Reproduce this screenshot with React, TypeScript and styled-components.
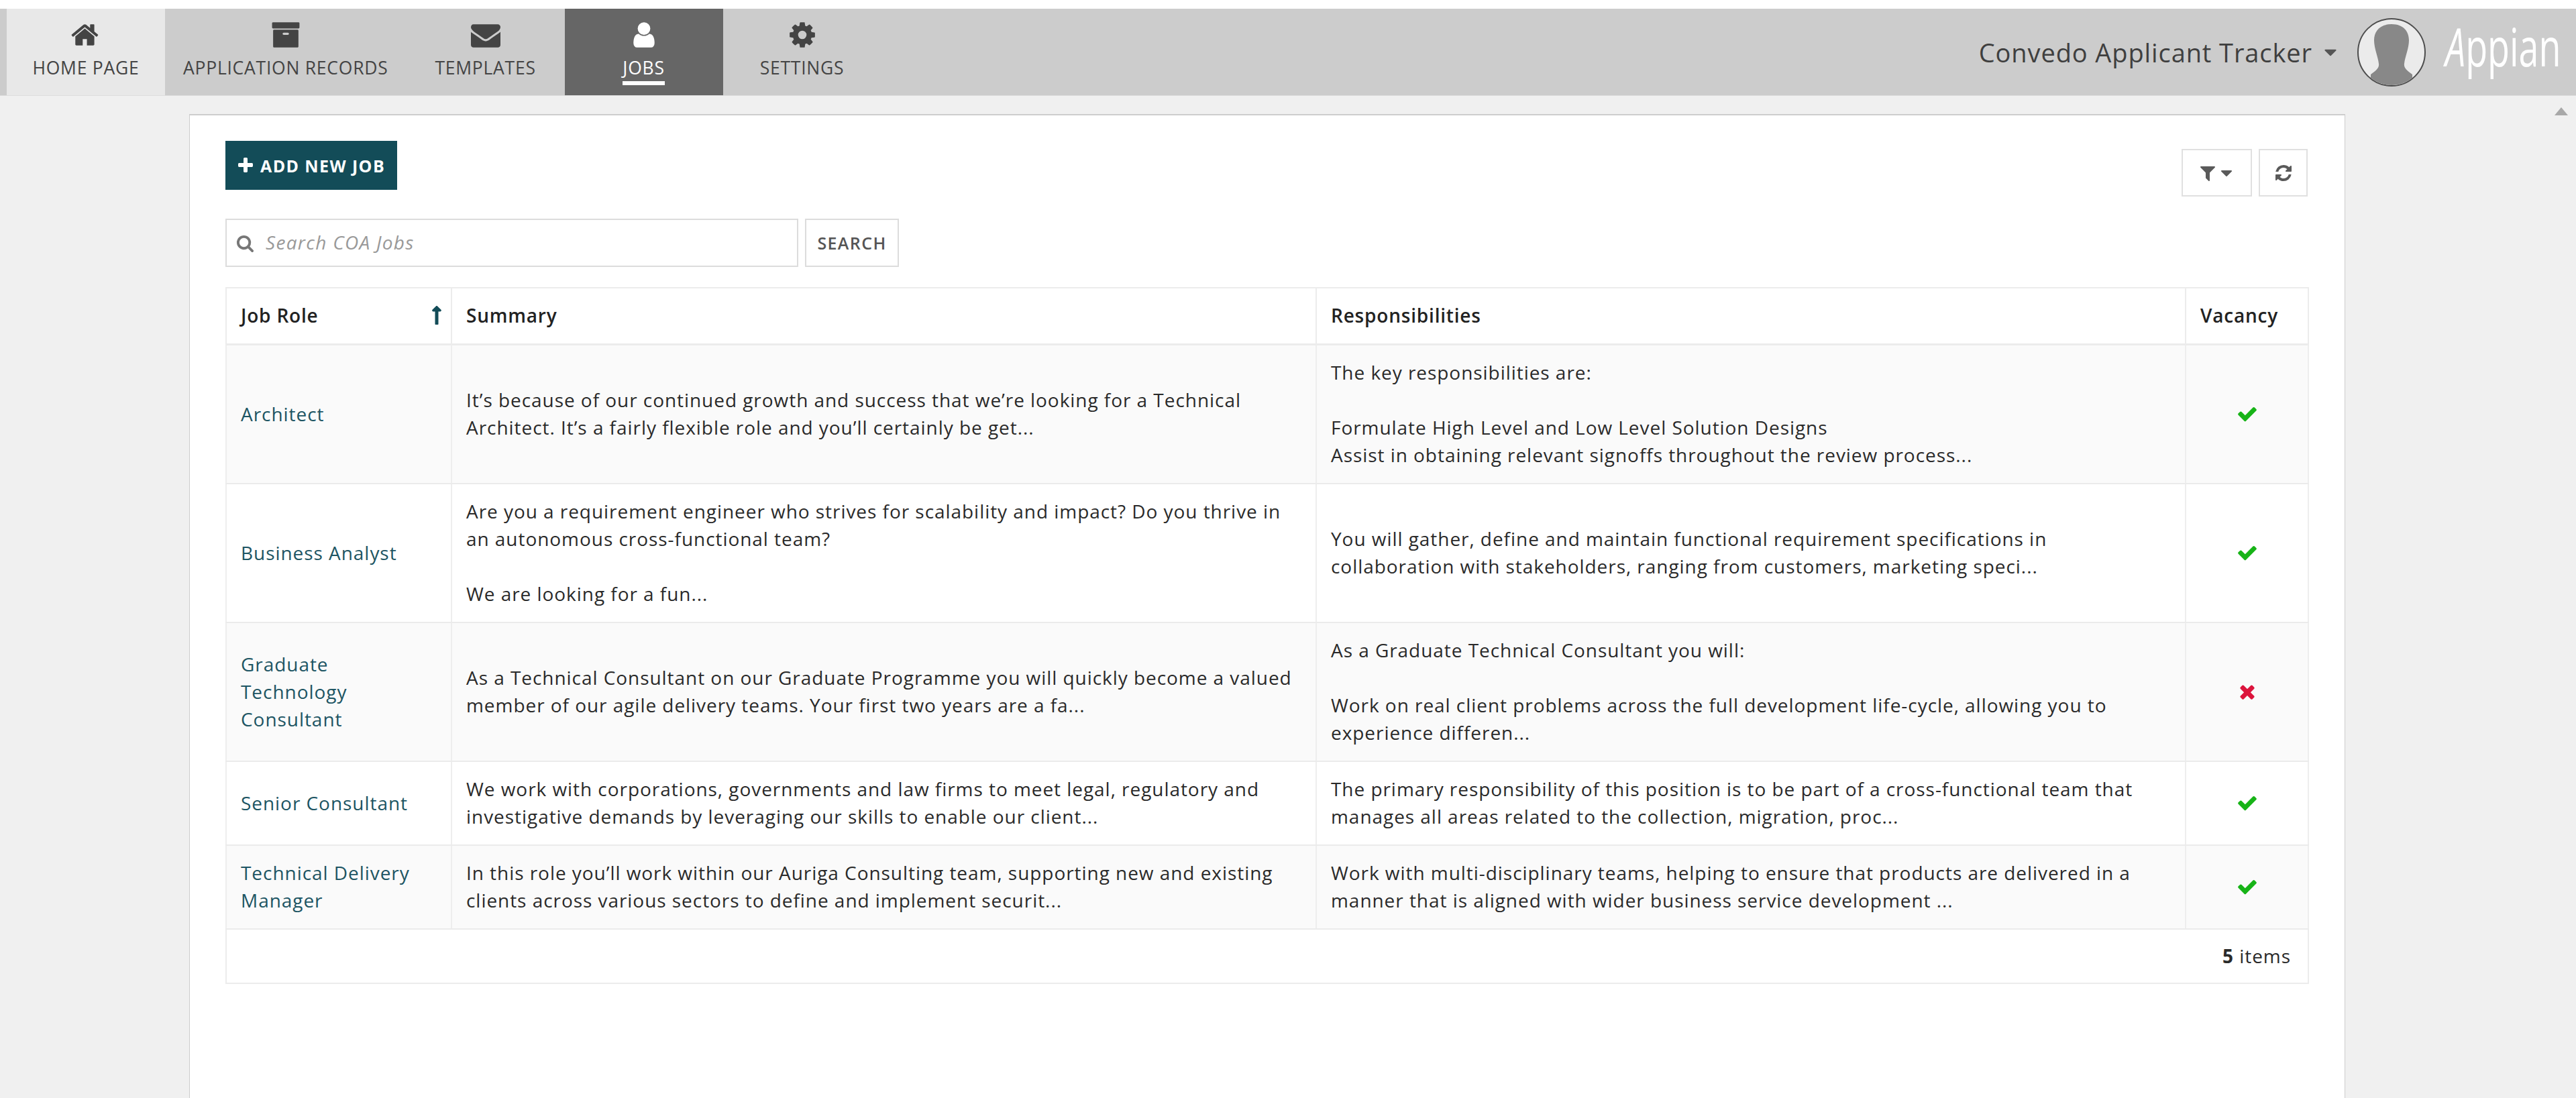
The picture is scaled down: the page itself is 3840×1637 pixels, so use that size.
import React from "react";
import styled, { createGlobalStyle } from "styled-components";
import { FaLongArrowAltUp } from "react-icons/fa";

const GlobalStyle = createGlobalStyle`
  html, body {
    margin: 0;
    padding: 0;
    height: 100%;
    background: #fff;
    overflow: hidden;
  }
  body {
    font-family: "Open Sans", "Liberation Sans", sans-serif;
    color: #222;
  }
  * { box-sizing: border-box; }
`;

// icons of the old icon font the page uses, all on a 1792 grid
const glyphs = {
  home: "M1408 992v480q0 26-19 45t-45 19h-384v-384h-256v384h-384q-26 0-45-19t-19-45v-480q0-1 .5-3t.5-3l575-474 575 474q1 2 1 6zm223-69l-62 74q-8 9-21 11h-3q-13 0-21-7l-692-577-692 577q-12 8-24 7-13-2-21-11l-62-74q-8-10-7-23.500t11-21.500l719-599q32-26 76-26t76 26l244 204v-195q0-14 9-23t23-9h192q14 0 23 9t9 23v408l219 182q10 8 11 21.500t-7 23.500z",
  archive: "M1088 832q0-26-19-45t-45-19h-256q-26 0-45 19t-19 45 19 45 45 19h256q26 0 45-19t19-45zm576-192v960q0 26-19 45t-45 19h-1408q-26 0-45-19t-19-45v-960q0-26 19-45t45-19h1408q26 0 45 19t19 45zm64-448v256q0 26-19 45t-45 19h-1536q-26 0-45-19t-19-45v-256q0-26 19-45t45-19h1536q26 0 45 19t19 45z",
  envelope: "M1792 710v794q0 66-47 113t-113 47h-1472q-66 0-113-47t-47-113v-794q44 49 101 87 362 246 497 345 57 42 92.500 65.500t94.500 48 110 24.500h2q51 0 110-24.500t94.500-48 92.500-65.500q170-123 498-345 57-39 100-87zm0-294q0 79-49 151t-122 123q-376 261-468 325-10 7-42.500 30.500t-54 38-52 32.500-57.500 27-50 9h-2q-23 0-50-9t-57.500-27-52-32.500-54-38-42.500-30.500q-91-64-262-182.500t-205-142.500q-62-42-117-115.500t-55-136.500q0-78 41.500-130t118.500-52h1472q65 0 112.500 47t47.500 113z",
  user: "M1536 1399q0 109-62.500 187t-150.500 78h-854q-88 0-150.500-78t-62.500-187q0-85 8.500-160.500t31.500-152 58.500-131 94-89 134.500-34.500q131 128 313 128t313-128q76 0 134.500 34.500t94 89 58.500 131 31.500 152 8.500 160.500zm-256-887q0 159-112.500 271.500t-271.500 112.500-271.500-112.500-112.500-271.500 112.500-271.500 271.500-112.500 271.500 112.500 112.500 271.500z",
  cog: "M1152 896q0-106-75-181t-181-75-181 75-75 181 75 181 181 75 181-75 75-181zm512-109v222q0 12-8 23t-20 13l-185 28q-19 54-39 91 35 50 107 138 10 12 10 25t-9 23q-27 37-99 108t-94 71q-12 0-26-9l-138-108q-44 23-91 38-16 136-29 186-7 28-36 28h-222q-14 0-24.500-8.500t-11.500-21.500l-28-184q-49-16-90-37l-141 107q-10 9-25 9-14 0-25-11-126-114-165-168-7-10-7-23 0-12 8-23 15-21 51-66.500t54-70.500q-27-50-41-99l-183-27q-13-2-21-12.500t-8-23.500v-222q0-12 8-23t19-13l186-28q14-46 39-92-40-57-107-138-10-12-10-24 0-10 9-23 26-36 98.500-107.500t94.500-71.500q13 0 26 10l138 107q44-23 91-38 16-136 29-186 7-28 36-28h222q14 0 24.500 8.500t11.500 21.500l28 184q49 16 90 37l142-107q9-9 24-9 13 0 25 10 129 119 165 170 7 8 7 22 0 12-8 23-15 21-51 66.500t-54 70.500q26 50 41 98l183 28q13 2 21 12.500t8 23.500z",
  filter: "M1595 295q17 41-14 70l-493 493v742q0 42-39 59-13 5-25 5-27 0-45-19l-256-256q-19-19-19-45v-486l-493-493q-31-29-14-70 17-39 59-39h1280q42 0 59 39z",
  refresh: "M1639 1056q0 5-1 7-64 268-268 434.500t-478 166.500q-146 0-282.500-55t-243.500-157l-129 129q-19 19-45 19t-45-19-19-45v-448q0-26 19-45t45-19h448q26 0 45 19t19 45-19 45l-137 137q71 66 161 102t187 36q134 0 250-65t186-179q11-17 53-117 8-23 30-23h192q13 0 22.500 9.500t9.500 22.500zm25-800v448q0 26-19 45t-45 19h-448q-26 0-45-19t-19-45 19-45l138-138q-148-137-349-137-134 0-250 65t-186 179q-11 17-53 117-8 23-30 23h-199q-13 0-22.500-9.500t-9.500-22.500v-7q65-268 270-434.500t480-166.500q146 0 284 55.500t245 156.500l130-129q19-19 45-19t45 19 19 45z",
  check: "M1671 566q0 40-28 68l-724 724-136 136q-28 28-68 28t-68-28l-136-136-362-362q-28-28-28-68t28-68l136-136q28-28 68-28t68 28l294 295 656-657q28-28 68-28t68 28l136 136q28 28 28 68z",
  times: "M1490 1322q0 40-28 68l-136 136q-28 28-68 28t-68-28l-294-294-294 294q-28 28-68 28t-68-28l-136-136q-28-28-28-68t28-68l294-294-294-294q-28-28-28-68t28-68l136-136q28-28 68-28t68 28l294 294 294-294q28-28 68-28t68 28l136 136q28 28 28 68t-28 68l-294 294 294 294q28 28 28 68z",
  search: "M1216 832q0-185-131.500-316.500t-316.500-131.500-316.500 131.500-131.500 316.500 131.500 316.500 316.500 131.500 316.500-131.500 131.500-316.500zm512 832q0 52-38 90t-90 38q-54 0-90-38l-343-342q-179 124-399 124-143 0-273.500-55.500t-225-150-150-225-55.500-273.500 55.500-273.500 150-225 225-150 273.500-55.500 273.500 55.500 225 150 150 225 55.500 273.500q0 220-124 399l343 343q37 37 37 90z",
  plus: "M1600 736v192q0 40-28 68t-68 28h-416v416q0 40-28 68t-68 28h-192q-40 0-68-28t-28-68v-416h-416q-40 0-68-28t-28-68v-192q0-40 28-68t68-28h416v-416q0-40 28-68t68-28h192q40 0 68 28t28 68v416h416q40 0 68 28t28 68z",
  caret: "M1408 704q0 26-19 45l-448 448q-19 19-45 19t-45-19l-448-448q-19-19-19-45t19-45 45-19h896q26 0 45 19t19 45z",
};

function Glyph({ name, className }: { name: keyof typeof glyphs; className?: string }) {
  return (
    <GlyphSvg className={className} viewBox="0 0 1792 1792">
      <path d={glyphs[name]} />
    </GlyphSvg>
  );
}

const tabs: { label: string; icon: keyof typeof glyphs; variant: string }[] = [
  { label: "HOME PAGE", icon: "home", variant: "home" },
  { label: "APPLICATION RECORDS", icon: "archive", variant: "plain" },
  { label: "TEMPLATES", icon: "envelope", variant: "plain" },
  { label: "JOBS", icon: "user", variant: "active" },
  { label: "SETTINGS", icon: "cog", variant: "plain" },
];

const jobs = [
  {
    role: ["Architect"],
    summary: [
      "It’s because of our continued growth and success that we’re looking for a Technical",
      "Architect. It’s a fairly flexible role and you’ll certainly be get...",
    ],
    duties: [
      "The key responsibilities are:",
      "",
      "Formulate High Level and Low Level Solution Designs",
      "Assist in obtaining relevant signoffs throughout the review process...",
    ],
    open: true,
  },
  {
    role: ["Business Analyst"],
    summary: [
      "Are you a requirement engineer who strives for scalability and impact? Do you thrive in",
      "an autonomous cross-functional team?",
      "",
      "We are looking for a fun...",
    ],
    duties: [
      "You will gather, define and maintain functional requirement specifications in",
      "collaboration with stakeholders, ranging from customers, marketing speci...",
    ],
    open: true,
  },
  {
    role: ["Graduate", "Technology", "Consultant"],
    summary: [
      "As a Technical Consultant on our Graduate Programme you will quickly become a valued",
      "member of our agile delivery teams. Your first two years are a fa...",
    ],
    duties: [
      "As a Graduate Technical Consultant you will:",
      "",
      "Work on real client problems across the full development life-cycle, allowing you to",
      "experience differen...",
    ],
    open: false,
  },
  {
    role: ["Senior Consultant"],
    summary: [
      "We work with corporations, governments and law firms to meet legal, regulatory and",
      "investigative demands by leveraging our skills to enable our client...",
    ],
    duties: [
      "The primary responsibility of this position is to be part of a cross-functional team that",
      "manages all areas related to the collection, migration, proc...",
    ],
    open: true,
  },
  {
    role: ["Technical Delivery", "Manager"],
    summary: [
      "In this role you’ll work within our Auriga Consulting team, supporting new and existing",
      "clients across various sectors to define and implement securit...",
    ],
    duties: [
      "Work with multi-disciplinary teams, helping to ensure that products are delivered in a",
      "manner that is aligned with wider business service development ...",
    ],
    open: true,
  },
];

function Lines({ lines }: { lines: string[] }) {
  return (
    <>
      {lines.map((line, i) => (
        <Line key={i}>{line || "\u00a0"}</Line>
      ))}
    </>
  );
}

function Avatar() {
  return (
    <AvatarSvg viewBox="0 0 102 102">
      <defs>
        <clipPath id="avatar-clip">
          <circle cx="51" cy="51" r="49" />
        </clipPath>
      </defs>
      <circle cx="51" cy="51" r="50" fill="#ebebeb" stroke="#4d4d4d" strokeWidth="2" />
      <path
        clipPath="url(#avatar-clip)"
        d="M51 9C33 9 25 20 25 33c0 12 6 25 7 35 1 6-4 10-12 16v26h62V84c-8-6-13-10-12-16 1-10 7-23 7-35C77 20 69 9 51 9z"
        fill="#888"
      />
    </AvatarSvg>
  );
}

export default function App() {
  return (
    <>
      <GlobalStyle />
      <Page>
        <TopBar>
          <TabList>
            {tabs.map(({ label, icon, variant }) => (
              <Tab key={label} $variant={variant}>
                <TabIcon name={icon} />
                <TabLabel $active={variant === "active"}>{label}</TabLabel>
              </Tab>
            ))}
          </TabList>
          <AccountArea>
            <AppName>Convedo Applicant Tracker</AppName>
            <AppCaret name="caret" />
            <Avatar />
            <Logo>
              <em>A</em>ppian
            </Logo>
          </AccountArea>
        </TopBar>
        <ScrollArrow />
        <Panel>
          <Toolbar>
            <AddButton>
              <Glyph name="plus" />
              ADD NEW JOB
            </AddButton>
            <ToolGroup>
              <ToolButton $wide>
                <Glyph name="filter" />
                <Glyph name="caret" />
              </ToolButton>
              <ToolButton>
                <Glyph name="refresh" />
              </ToolButton>
            </ToolGroup>
          </Toolbar>
          <SearchRow>
            <SearchBox>
              <Glyph name="search" />
              <SearchInput placeholder="Search COA Jobs" />
            </SearchBox>
            <SearchButton>SEARCH</SearchButton>
          </SearchRow>
          <Grid>
            <colgroup>
              <col style={{ width: 336 }} />
              <col style={{ width: 1289 }} />
              <col style={{ width: 1296 }} />
              <col style={{ width: 183 }} />
            </colgroup>
            <thead>
              <tr>
                <HeadCell>
                  Job Role
                  <SortArrow />
                </HeadCell>
                <HeadCell>Summary</HeadCell>
                <HeadCell>Responsibilities</HeadCell>
                <HeadCell>Vacancy</HeadCell>
              </tr>
            </thead>
            <tbody>
              {jobs.map((job, i) => (
                <Row key={job.role.join(" ")} $striped={i % 2 === 0}>
                  <Cell>
                    <RoleLink>
                      <Lines lines={job.role} />
                    </RoleLink>
                  </Cell>
                  <Cell>
                    <Lines lines={job.summary} />
                  </Cell>
                  <Cell>
                    <Lines lines={job.duties} />
                  </Cell>
                  <StatusCell>
                    {job.open ? <OpenIcon name="check" /> : <ClosedIcon name="times" />}
                  </StatusCell>
                </Row>
              ))}
            </tbody>
            <tfoot>
              <tr>
                <FootCell colSpan={4}>
                  <strong>5</strong> items
                </FootCell>
              </tr>
            </tfoot>
          </Grid>
        </Panel>
      </Page>
    </>
  );
}

const GlyphSvg = styled.svg`
  display: block;
  flex: none;
  fill: currentColor;
`;

const Page = styled.div`
  position: relative;
  height: 1637px;
  padding-top: 13px;
  background: linear-gradient(#fff 13px, #f0f0f0 13px);
  overflow: hidden;
`;

const TopBar = styled.header`
  display: flex;
  justify-content: space-between;
  height: 130px;
  padding: 0 29px 0 10px;
  background: #cccccc;
  border-bottom: 1px solid #dedede;
`;

const TabList = styled.nav`
  display: flex;
`;

const tabColors: Record<string, string> = {
  home: "background: #e8e8e8; color: #444;",
  plain: "color: #444;",
  active: "background: #666666; color: #fff;",
};

const Tab = styled.a<{ $variant: string }>`
  display: flex;
  flex-direction: column;
  align-items: center;
  min-width: 236px;
  padding: 17px 27px 0;
  ${(p) => tabColors[p.$variant]}
`;

const TabIcon = styled(Glyph)`
  width: 44px;
  height: 44px;
`;

const TabLabel = styled.span<{ $active: boolean }>`
  margin-top: 10px;
  padding-bottom: 3px;
  font-size: 26.5px;
  letter-spacing: 0.75px;
  line-height: 34px;
  white-space: nowrap;
  border-bottom: ${(p) => (p.$active ? "6px solid #fff" : "none")};
`;

const AccountArea = styled.div`
  display: flex;
  align-items: center;
`;

const AppName = styled.span`
  font-size: 38px;
  color: #3f3f3f;
  letter-spacing: 0.9px;
  white-space: nowrap;
`;

const AppCaret = styled(Glyph)`
  width: 30px;
  height: 30px;
  margin-left: 12px;
  color: #555;
`;

const AvatarSvg = styled.svg`
  width: 102px;
  height: 102px;
  margin-left: 25px;
`;

const Logo = styled.span`
  width: 166px;
  margin: 0 0 18px 29px;
  font-size: 78px;
  line-height: 1;
  color: #fff;
  transform: scaleX(0.69);
  transform-origin: left center;

  em {
    font-style: italic;
  }
`;

const ScrollArrow = styled.span`
  position: absolute;
  top: 160px;
  right: 12px;
  border-left: 10px solid transparent;
  border-right: 10px solid transparent;
  border-bottom: 12px solid #a8a8a8;
`;

const Panel = styled.main`
  width: 3214px;
  min-height: 1500px;
  margin: 27px 0 0 282px;
  padding: 38px 55px 0 53px;
  background: #fff;
  border: 1px solid #cdcdcd;
  border-top-width: 2px;
`;

const Toolbar = styled.div`
  display: flex;
  justify-content: space-between;
  align-items: flex-start;
`;

const AddButton = styled.button`
  display: flex;
  align-items: center;
  gap: 8px;
  width: 256px;
  height: 73px;
  padding: 0 0 0 16px;
  border: 0;
  background: #134c58;
  color: #fff;
  font: 700 25px "Open Sans", sans-serif;
  letter-spacing: 1.4px;
  white-space: nowrap;

  svg {
    width: 28px;
    height: 28px;
  }
`;

const ToolGroup = styled.div`
  display: flex;
  gap: 10px;
  margin-top: 12px;
`;

const ToolButton = styled.button<{ $wide?: boolean }>`
  display: flex;
  align-items: center;
  justify-content: center;
  gap: 0;
  width: ${(p) => (p.$wide ? "105px" : "73px")};
  height: 71px;
  padding: 0;
  border: 2px solid #e0e0e0;
  background: #fff;
  color: #5a5a5a;

  svg {
    width: 28px;
    height: 28px;
  }
`;

const SearchRow = styled.div`
  display: flex;
  gap: 10px;
  margin-top: 33px;
`;

const SearchBox = styled.label`
  display: flex;
  align-items: center;
  gap: 17px;
  width: 854px;
  height: 72px;
  padding: 0 14px;
  border: 2px solid #dcdcdc;
  color: #777;

  svg {
    width: 27px;
    height: 27px;
  }
`;

const SearchInput = styled.input`
  flex: 1;
  min-width: 0;
  border: 0;
  outline: 0;
  padding: 0 0 2px;
  font: italic 400 28px "Open Sans", sans-serif;
  letter-spacing: 1.3px;
  color: #333;

  &::placeholder {
    color: #999;
    opacity: 1;
  }
`;

const SearchButton = styled.button`
  width: 140px;
  height: 72px;
  padding: 0;
  border: 2px solid #dcdcdc;
  background: #fff;
  color: #555;
  font: 600 25px "Open Sans", sans-serif;
  letter-spacing: 1.4px;
`;

const Grid = styled.table`
  width: 3104px;
  margin-top: 30px;
  table-layout: fixed;
  border-collapse: collapse;
  font-size: 28px;
  letter-spacing: 0.95px;
  line-height: 41px;
`;

const HeadCell = styled.th`
  position: relative;
  height: 84px;
  padding: 0 21px;
  text-align: left;
  font-weight: 600;
  letter-spacing: 0.8px;
  border: 2px solid #ececec;
  border-bottom-width: 3px;
  white-space: nowrap;
`;

const SortArrow = styled(FaLongArrowAltUp)`
  position: absolute;
  top: 24px;
  right: 6px;
  width: 30px;
  height: 32px;
  color: #134c58;
`;

const Row = styled.tr<{ $striped: boolean }>`
  background: ${(p) => (p.$striped ? "#fafafa" : "#fff")};
`;

const Cell = styled.td`
  padding: 20.5px 21px;
  border: 2px solid #eeeeee;
  border-bottom-color: #ebebeb;
  vertical-align: middle;
  color: #2a2a2a;
`;

const StatusCell = styled(Cell)`
  padding: 0;
`;

const Line = styled.div`
  white-space: nowrap;
`;

const RoleLink = styled.a`
  display: block;
  color: #1d5563;
`;

const OpenIcon = styled(Glyph)`
  width: 32px;
  height: 32px;
  margin: 0 auto;
  color: #17b317;
`;

const ClosedIcon = styled(OpenIcon)`
  color: #dc143c;
`;

const FootCell = styled.td`
  height: 81px;
  padding: 0 25px;
  text-align: right;
  border: 2px solid #ececec;
  color: #2a2a2a;
`;
